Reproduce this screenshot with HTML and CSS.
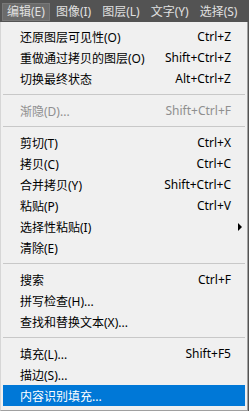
FILE: index.html
```html
<!DOCTYPE html>
<html lang="zh-CN">
<head>
  <meta charset="UTF-8">
  <meta name="viewport" content="width=device-width, initial-scale=1.0">
  <title>编辑菜单</title>
  <link rel="stylesheet" href="styles.css">
</head>
<body>
  <nav class="menubar">
    <span class="menubar-item active">编辑(E)</span>
    <span class="menubar-item">图像(I)</span>
    <span class="menubar-item">图层(L)</span>
    <span class="menubar-item">文字(Y)</span>
    <span class="menubar-item">选择(S)</span>
  </nav>

  <ul class="menu">
    <li class="menu-item"><span>还原图层可见性(O)</span><span class="shortcut">Ctrl+Z</span></li>
    <li class="menu-item"><span>重做通过拷贝的图层(O)</span><span class="shortcut">Shift+Ctrl+Z</span></li>
    <li class="menu-item"><span>切换最终状态</span><span class="shortcut">Alt+Ctrl+Z</span></li>
    <li class="separator"></li>
    <li class="menu-item disabled"><span>渐隐(D)...</span><span class="shortcut">Shift+Ctrl+F</span></li>
    <li class="separator"></li>
    <li class="menu-item"><span>剪切(T)</span><span class="shortcut">Ctrl+X</span></li>
    <li class="menu-item"><span>拷贝(C)</span><span class="shortcut">Ctrl+C</span></li>
    <li class="menu-item"><span>合并拷贝(Y)</span><span class="shortcut">Shift+Ctrl+C</span></li>
    <li class="menu-item"><span>粘贴(P)</span><span class="shortcut">Ctrl+V</span></li>
    <li class="menu-item"><span>选择性粘贴(I)</span><span class="shortcut"></span><span class="submenu-arrow"></span></li>
    <li class="menu-item"><span>清除(E)</span><span class="shortcut"></span></li>
    <li class="separator"></li>
    <li class="menu-item"><span>搜索</span><span class="shortcut">Ctrl+F</span></li>
    <li class="menu-item"><span>拼写检查(H)...</span><span class="shortcut"></span></li>
    <li class="menu-item"><span>查找和替换文本(X)...</span><span class="shortcut"></span></li>
    <li class="separator"></li>
    <li class="menu-item"><span>填充(L)...</span><span class="shortcut">Shift+F5</span></li>
    <li class="menu-item"><span>描边(S)...</span><span class="shortcut"></span></li>
    <li class="menu-item selected"><span>内容识别填充...</span><span class="shortcut"></span></li>
  </ul>
</body>
</html>
```

FILE: styles.css
```css
/* Reset */
*, *::before, *::after {
  box-sizing: border-box;
  margin: 0;
  padding: 0;
}

:root {
  --bar-bg: #535353;
  --bar-text: #e0e0e0;
  --bar-active: #6b6b6b;
  --menu-bg: #f0f0f0;
  --menu-border: #a0a0a0;
  --text: #000000;
  --text-disabled: #8f8f8f;
  --separator: #c8c8c8;
  --highlight: #0078d7;
}

body {
  font-family: "Noto Sans", "Noto Sans CJK SC", sans-serif;
  font-size: 12px;
  background: var(--bar-bg);
  width: 249px;
  height: 411px;
  overflow: hidden;
}

/* Top menu bar */
.menubar {
  display: flex;
  height: 22px;
  padding: 3px 0 1px 2px;
  gap: 1px;
}

.menubar-item {
  display: flex;
  align-items: center;
  padding: 0 5px;
  color: var(--bar-text);
  line-height: 1;
}

.menubar-item.active {
  background: var(--bar-active);
  border: 1px solid #787878;
  padding: 0 4px;
}

/* Dropdown */
.menu {
  list-style: none;
  width: 248px;
  height: 389px;
  background: var(--menu-bg);
  border-left: 1px solid #d6d6d6;
  border-right: 1px solid var(--menu-border);
  border-bottom: 1px solid var(--menu-border);
  padding: 4px 2px 0 2px;
}

.menu-item {
  display: grid;
  grid-template-columns: 1fr auto 14px;
  align-items: center;
  height: 21px;
  padding-left: 17px;
  color: var(--text);
  white-space: nowrap;
}

.menu-item.disabled {
  color: var(--text-disabled);
}

.menu-item.selected {
  background: var(--highlight);
  color: #ffffff;
}

.shortcut {
  text-align: right;
}

.submenu-arrow {
  width: 0;
  height: 0;
  margin-left: 7px;
  border-top: 4px solid transparent;
  border-bottom: 4px solid transparent;
  border-left: 4px solid #000;
}

.separator {
  height: 11px;
  display: flex;
  align-items: center;
}

.separator::before {
  content: '';
  flex: 1;
  height: 1px;
  background: var(--separator);
}
```
